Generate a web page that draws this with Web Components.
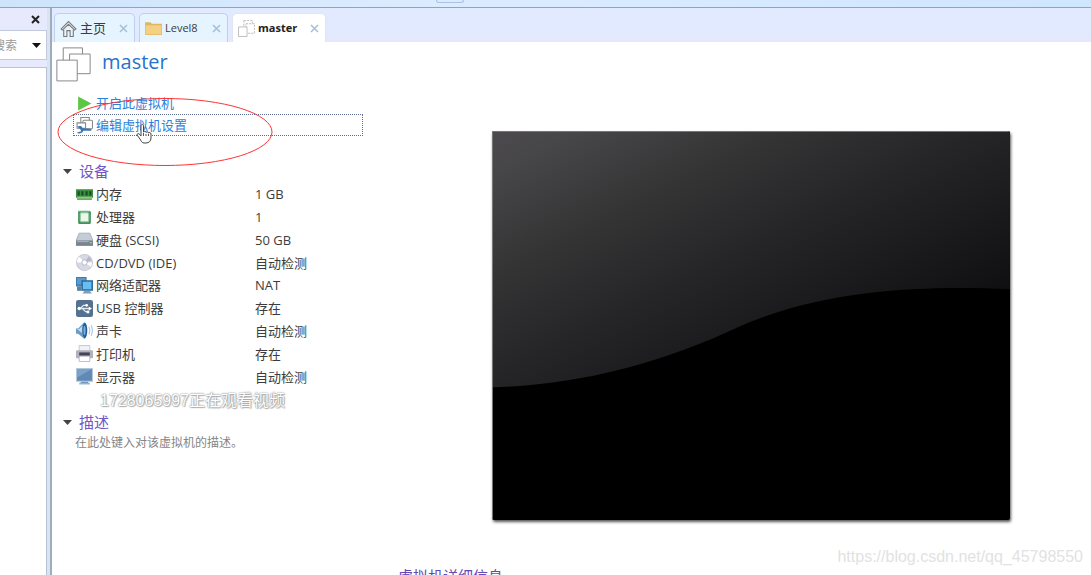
<!DOCTYPE html>
<html lang="zh-CN">
<head>
<meta charset="utf-8">
<title>master</title>
<style>
html, body { margin: 0; height: 100%; }
body { overflow: hidden; background: #fff; font: 13px/16px "Open Sans", "Noto Sans CJK SC", sans-serif; color: #3c3c3c; }
</style>
</head>
<body>
<vm-app></vm-app>
<script>
const define = (name, html, setup) => {
  const tpl = document.createElement('template');
  tpl.innerHTML = html;
  customElements.define(name, class extends HTMLElement {
    constructor() {
      super();
      this.attachShadow({ mode: 'open' }).append(tpl.content.cloneNode(true));
    }
    connectedCallback() { if (setup) setup(this, this.shadowRoot); }
  });
};

const icons = {
  home: '<path d="M1 8.5 8 1.5l7 7-1.2 1L8 4 2.2 9.500z" fill="#fff" stroke="#777"/><path d="M3.500 9v6.500h3V10h3v5.500h3V9" fill="none" stroke="#777"/>',
  folder: '<path d="M0 2h5l1.500 1.500H16V14H0z" fill="#e0b75e"/><path d="M.5 5h15v8.500H.5z" fill="#f4d084"/>',
  vms: '<g fill="#fff" stroke="#aaa" stroke-width=".7"><path d="M5.500.5h8v8h-8z" stroke-dasharray="2 1"/><path d="M7.500 3.500h8v9h-8z" stroke-dasharray="2 1"/><path d="M.5 6.500h8v9h-8z"/></g>',
  vmsbig: '<g fill="#fff" stroke="#888" stroke-width=".45"><path d="M3.300.4h8.800v6H3.300z"/><path d="M6.200 3.200h9.400v9H6.200z"/><path d="M.4 6h9.300v9.500H.4z"/></g>',
  play: '<path d="M2 1.500 14.500 8 2 14.500z" fill="#5cc646"/>',
  edit: '<g fill="#fff" stroke="#888"><path d="M4.500.5h8v6h-8z"/><rect x="6.500" y="3" width="9" height="8" rx="1"/><path d="M1 5.500h8v5H1z"/></g><path d="M1 9c2-1 5-1 5 1.500l7 .5 2 1-1 1h-4l-3 0c-1 2.500-5 3.500-6 1.500l4-1-1-2z" fill="#3977b3"/>',
  memory: '<path d="M0 3h16v8h-1v2H1v-2H0z" fill="#3b8d42"/><path d="M1 10h14v2H1z" fill="#8cc982"/><path d="M1.500 5h2v4h-2zM5 5h2v4H5zM9 5h2v4H9zM12.500 5h2v4h-2z" fill="#194d26"/>',
  cpu: '<rect x="2" y="2" width="12" height="12" rx="1" fill="#43925a"/><rect x="4" y="3.500" width="8" height="8.500" rx="1" fill="#edf5ed" stroke="#90c99e"/><path d="M2 2h12" stroke="#72b985" stroke-dasharray="1 1"/>',
  disk: '<path d="M3 2h10l3 7H0z" fill="#c4ccd5" stroke="#8c98a5" stroke-width=".6"/><path d="M0 9h16v5H0z" fill="#78848f"/><path d="M1 10h11" stroke="#a9b4bd"/><path d="M13 11h2" stroke="#8ce096"/>',
  disc: '<circle cx="8" cy="8" r="7.500" fill="#d7dae4" stroke="#c5c9d5"/><path d="M8 8 3 2.500A7 7 0 0 0 .8 8zM8 8l6 4a7 7 0 0 0 1-4z" fill="#fff"/><path d="M8 8 12 2l3 4z" fill="#b6b6cf"/><circle cx="8" cy="8" r="2.500" fill="#fff" stroke="#a0a5b8" stroke-width=".7"/>',
  network: '<path d="M0 0h10v9H0z" fill="#397fb5"/><path d="M1 1h8v6H1z" fill="#5b9ccc"/><path d="M1 9h4v4H1z" fill="#59819f"/><path d="M5 3h11v10H5z" fill="#316d9d"/><path d="M6.500 4.500h8v7h-8z" fill="#65bff0"/><path d="M8 13h5l2 2.500H6z" fill="#7ba0bc"/>',
  usb: '<rect width="16" height="16" rx="2" fill="#54728d"/><path d="M2 8h11M4 8l3-3h3M6 8l3 3h2" fill="none" stroke="#dce7ef" stroke-width="1.200"/><path d="m12 6 3 2-3 2z" fill="#fff"/><circle cx="3" cy="8" r="1.600" fill="#fff"/><circle cx="10" cy="5" r="1.300" fill="#fff"/><path d="M10 10h2.500v2.500H10z" fill="#fff"/>',
  sound: '<path d="M0 6h2l6-6c3 2 3 14 0 16l-6-5H0z" fill="#6c9cc6"/><path d="M1 6.500h2l3-3v7z" fill="#c0dcf0"/><ellipse cx="8.300" cy="8" rx="2.300" ry="7" fill="#275c92"/><ellipse cx="8" cy="8" rx="1" ry="4.500" fill="#75b2e0"/><path d="M12 4.500q2 3.500 0 7M14.200 3q2.500 5 0 10" fill="none" stroke="#a7c5e2"/>',
  printer: '<path d="M3 .5h10V6H3z" fill="#f0f2f8" stroke="#b6b8c8" stroke-width=".7"/><rect y="5" width="16" height="7.500" rx="1" fill="#b0b1bd"/><path d="M3 7h10v3H3z" fill="#454552"/><path d="M3 10.500h10v5H3z" fill="#fff" stroke="#a6a8c5" stroke-width=".7"/>',
  display: '<path d="M0 0h16v13H0z" fill="#b3c7dd"/><path d="M1 1h14v11H1z" fill="#6189b6"/><path d="M1 1h14L1 9z" fill="#7da2c9"/><path d="M5 13h6l1 1H4z" fill="#6a97bd"/><path d="M3 14h10v1.500H3z" fill="#8fb5d5"/>'
};
define('vm-icon', `<style>:host{display:inline-block;width:17px;height:17px;flex:none}svg{display:block;width:100%;height:100%}</style><svg viewBox="0 0 16 16" aria-hidden="true"></svg>`,
  (el, root) => { root.querySelector('svg').innerHTML = icons[el.getAttribute('name')]; });

define('vm-tab', `<style>
:host{display:block;box-sizing:border-box;height:29px;border:1px solid #bdd0f0;border-bottom:0;border-radius:5px 5px 0 0;background:#e5f4fe}
:host([active]){background:#fff;border-color:#e0e5f6;font-weight:700;color:#222}
.tab{display:flex;align-items:center;height:28px;padding:0 6px 0 5px}
button{border:0;padding:0;background:none;font:inherit;color:inherit}
.name{flex:1;display:flex;align-items:center;gap:3px}
.close{width:9px;height:16px;display:flex;align-items:center}
svg{width:9px;height:9px}
</style><div class="tab"><button class="name"><slot name="icon"></slot><slot></slot></button><button class="close" aria-label="关闭"><svg viewBox="0 0 9 9"><path d="m1 1 7 7m0-7-7 7" stroke="#a6bed9" stroke-width="1.500"/></svg></button></div>`);

define('vm-tabs', `<style>
:host{display:flex;box-sizing:border-box;height:34px;padding:5px 0 0 2px;gap:4px;background:linear-gradient(#e1eafe 70%,#e8e7fc)}
.home{width:81px;font-size:13px}.level{width:89px;font-size:11px}.master{width:94px;font-size:11px}
</style>
<vm-tab class="home"><vm-icon slot="icon" name="home"></vm-icon>主页</vm-tab>
<vm-tab class="level"><vm-icon slot="icon" name="folder"></vm-icon>Level8</vm-tab>
<vm-tab class="master" active><vm-icon slot="icon" name="vms"></vm-icon>master</vm-tab>`);

define('vm-sidebar', `<style>
:host{display:flex;flex-direction:column;box-sizing:border-box;width:50px;border-right:3px solid #d9e4f3;background:#e7e9fc;overflow:hidden}
.head{height:22px;display:flex;justify-content:flex-end;align-items:center;padding-right:7px}
button{border:0;padding:0;background:none;width:9px;height:9px}
svg{display:block}
.search{box-sizing:border-box;height:30px;border:1px solid #c1c9dc;border-left:0;background:#fff;display:flex;align-items:center;justify-content:space-between;padding-right:5px}
input{width:17px;height:16px;border:0;padding:0;direction:rtl;font:12px/16px "Noto Sans CJK SC",sans-serif;color:#999;background:none;outline:0}
.tree{flex:1;margin-top:7px;border:1px solid #b9c3d8;border-left:0;border-bottom:0;background:#fff}
</style>
<div class="head"><button aria-label="关闭"><svg width="9" height="9"><path d="m1 1 7 7m0-7-7 7" stroke="#222" stroke-width="2"/></svg></button></div>
<div class="search"><input aria-label="搜索" value="搜索"><button aria-label="展开"><svg width="9" height="9"><path d="M0 2h9L4.500 7z" fill="#111"/></svg></button></div>
<div class="tree"></div>`);

define('vm-actions', `<style>
:host{display:block;position:relative}
a{display:flex;align-items:center;box-sizing:border-box;height:22px;gap:3px;padding-left:2px;color:#2f80d8;text-decoration:none;border:1px solid transparent}
a.focused{border:1px dotted #5d6c90}
.ring{position:absolute;left:-16px;top:5px;width:216px;height:70px;pointer-events:none;z-index:1}
.hand{position:absolute;left:63px;top:31px;width:16px;height:22px;z-index:1}
</style>
<a href="#start"><vm-icon name="play"></vm-icon>开启此虚拟机</a>
<a class="focused" href="#settings"><vm-icon name="edit"></vm-icon>编辑虚拟机设置</a>
<svg class="ring" viewBox="0 0 216 70"><ellipse cx="108" cy="35" rx="107" ry="33.500" fill="none" stroke="#f33" stroke-width="1"/></svg>
<svg class="hand" viewBox="0 0 16 22"><path d="M5 13V3c0-2 2.500-2 2.500 0v6c.5-1 2.500-1 2.500.5.500-1 2.500-1 2.500.5.500-1 2.500-.5 2.500 1v4c0 3-2 5-5 5H8c-2 0-3-2-4-4l-3-4c0-2 2-2 4 1z" fill="#fff" stroke="#444"/><path d="M7.500 10v3M10 11v2M12.500 11v2" stroke="#555"/></svg>`);

define('vm-section', `<style>
:host{display:block}
h2{margin:0;display:flex;align-items:center;gap:7px;height:22px;font-size:15px;line-height:22px;font-weight:400;color:#7358c4}
svg{display:block}
</style><h2><svg width="9" height="7"><path d="M0 1h9L4.500 6z" fill="#444"/></svg><slot name="title"></slot></h2><slot></slot>`);

const devices = [
  ['memory', '内存', '1 GB'], ['cpu', '处理器', '1'], ['disk', '硬盘 (SCSI)', '50 GB'],
  ['disc', 'CD/DVD (IDE)', '自动检测'], ['network', '网络适配器', 'NAT'], ['usb', 'USB 控制器', '存在'],
  ['sound', '声卡', '自动检测'], ['printer', '打印机', '存在'], ['display', '显示器', '自动检测']
];
define('vm-devices', `<style>
:host{display:block;margin-left:13px}
table{width:100%;height:205px;border-spacing:0;table-layout:fixed}
th,td{padding:0;font-weight:400;text-align:left}
th{width:179px}
div{display:flex;align-items:center;gap:3px}
</style><table><tbody></tbody></table>`, (el, root) => {
  root.querySelector('tbody').innerHTML = devices.map(([i, n, v]) =>
    `<tr><th scope="row"><div><vm-icon name="${i}"></vm-icon>${n}</div></th><td>${v}</td></tr>`).join('');
});

define('vm-preview', `<style>
:host{display:block;aspect-ratio:4/3;background:#000;border-radius:2px;box-shadow:1px 2px 3px #555;overflow:hidden}
svg{display:block;width:100%;height:100%}
</style><svg viewBox="0 0 518 388" preserveAspectRatio="none"><defs><linearGradient id="g" gradientUnits="userSpaceOnUse" x1="0" y1="0" x2="165" y2="330"><stop stop-color="#4c4a4e"/><stop offset=".1" stop-color="#474648"/><stop offset=".35" stop-color="#343435"/><stop offset=".62" stop-color="#242426"/><stop offset="1" stop-color="#101012"/></linearGradient></defs>
<path d="M0 0h518v158C445 155 340 155 248 195 170 232 85 254 0 256z" fill="url(#g)"/><path d="M.5 388V.5h517" fill="none" stroke="#777"/></svg>`);

define('vm-page', `<style>
:host{display:grid;grid-template-columns:346px 1fr;flex:1;min-height:0;overflow:hidden;background:#fff}
header{display:flex;align-items:center;gap:11px;padding:5px 0 0 4px;height:34px}
header vm-icon{width:35px;height:35px}
h1{margin:0;font-size:20px;line-height:28px;font-weight:400;color:#2a72c8;padding-bottom:4px}
vm-actions{margin:11px 35px 0 21px}
vm-section{margin:24px 35px 0 11px}
vm-devices{margin-top:1px}
.viewer{margin:5px 0 0 48px;height:16px;font:16px/16px "Liberation Sans","Noto Sans CJK SC",sans-serif;color:#fff;text-shadow:0 0 1px #888,0 0 2px #999,1px 1px 1px #bbb;white-space:nowrap}
.description{margin-top:2px}
p{margin:2px 0 0 12px;font-size:12px;color:#858585;white-space:nowrap}
.right{padding:89px 81px 0 94px}
.details{margin:45px 0 0 -94px;font-size:15px;line-height:22px;font-weight:400;color:#6548b4;white-space:nowrap}
</style>
<div>
<header><vm-icon name="vmsbig"></vm-icon><h1>master</h1></header>
<vm-actions></vm-actions>
<vm-section><span slot="title">设备</span><vm-devices></vm-devices></vm-section>
<div class="viewer">1728065997正在观看视频</div>
<vm-section class="description"><span slot="title">描述</span><p>在此处键入对该虚拟机的描述。</p></vm-section>
</div>
<div class="right"><vm-preview></vm-preview><h2 class="details">虚拟机详细信息</h2></div>`);

define('vm-app', `<style>
:host{display:flex;flex-direction:column;height:100vh;position:relative;overflow:hidden}
.top{height:7px;flex:none;background:linear-gradient(90deg,#cde4fb,#dcecff 40%,#cfe6ff);border-bottom:1px solid #8fa4c2;display:flex}
.grip{box-sizing:border-box;width:28px;height:3px;margin-left:40%;border:1px solid #a9c1ea;border-top:0;border-radius:0 0 4px 4px}
.body{display:flex;flex:1;min-height:0}
main{flex:1;min-width:0;display:flex;flex-direction:column;border-left:2px solid #a2abba}
.mark{position:absolute;right:8px;bottom:8px;font:16px/20px "Liberation Sans",sans-serif;color:#e2e2e2}
</style>
<div class="top"><div class="grip"></div></div>
<div class="body"><vm-sidebar></vm-sidebar><main><vm-tabs></vm-tabs><vm-page></vm-page></main></div>
<div class="mark">https://blog.csdn.net/qq_45798550</div>`);
</script>
</body>
</html>
